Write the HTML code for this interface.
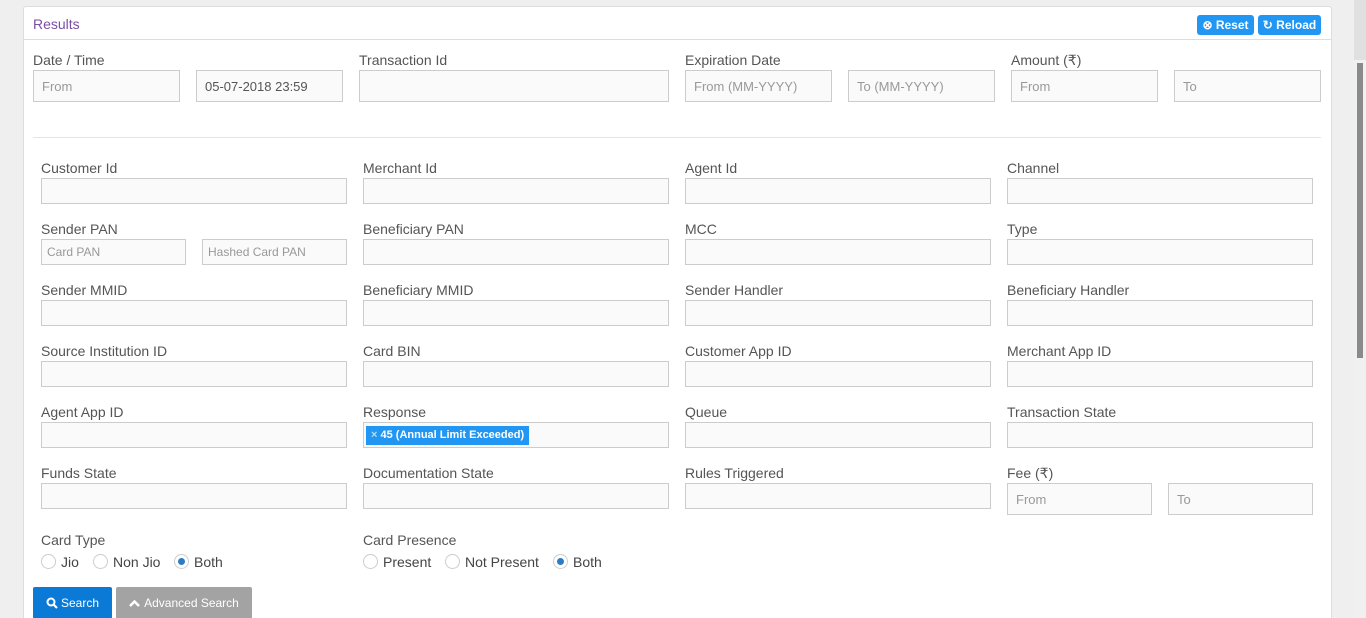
<!DOCTYPE html>
<html style="overflow:hidden;height:618px"><head><meta charset="utf-8"><style>
*{box-sizing:border-box;margin:0;padding:0}
html,body{overflow:hidden}
body{width:1366px;height:618px;overflow:hidden;background:#efefef;font-family:"Liberation Sans",sans-serif;position:relative;color:#555}
.panel{position:absolute;left:23px;top:6px;width:1309px;height:612px;background:#fff;border:1px solid #ddd;border-bottom:none;border-radius:3px 3px 0 0}
.hdr{position:absolute;left:23px;top:39px;width:1309px;height:1px;background:#ddd}
.a{position:absolute}
.lbl{position:absolute;font-size:14px;color:#555;line-height:16px}
.in{position:absolute;background:#fafafa;border:1px solid #ccc;font-size:13px;color:#999;padding-left:8px;display:flex;align-items:center}
.btn{position:absolute;color:#fff;font-size:12px;border-radius:3px;display:flex;align-items:center;justify-content:center;font-weight:bold}
.r{position:absolute;width:15px;height:15px;border:1px solid #ccc;border-radius:50%;background:#fff}
.r.on::after{content:"";position:absolute;left:3px;top:3px;width:7px;height:7px;border-radius:50%;background:#2a7dc4}
.rt{position:absolute;font-size:14px;color:#444;line-height:16px}
</style></head><body>
<div class="panel"></div><div class="hdr"></div>
<div class="lbl" style="left:33px;top:16px;color:#7b4fa6;font-size:14px">Results</div>
<div class="btn" style="left:1197px;top:15px;width:57px;height:20px;background:#2196f3">&#x2297; Reset</div>
<div class="btn" style="left:1258px;top:15px;width:63px;height:20px;background:#2196f3">&#x21bb; Reload</div>
<div class="a" style="left:1354px;top:0;width:12px;height:618px;background:#f0f0f0"></div>
<div class="a" style="left:1354px;top:0;width:12px;height:60px;background:#e0e0e0"></div>
<div class="a" style="left:1357px;top:63px;width:6px;height:295px;background:#8a8a8a"></div>

<div class="lbl" style="left:33px;top:52px">Date / Time</div>
<div class="in" style="left:33px;top:70px;width:147px;height:32px">From</div>
<div class="in" style="left:196px;top:70px;width:147px;height:32px;color:#555">05-07-2018 23:59</div>
<div class="lbl" style="left:359px;top:52px">Transaction Id</div>
<div class="in" style="left:359px;top:70px;width:310px;height:32px"></div>
<div class="lbl" style="left:685px;top:52px">Expiration Date</div>
<div class="in" style="left:685px;top:70px;width:147px;height:32px">From (MM-YYYY)</div>
<div class="in" style="left:848px;top:70px;width:147px;height:32px">To (MM-YYYY)</div>
<div class="lbl" style="left:1011px;top:52px">Amount (₹)</div>
<div class="in" style="left:1011px;top:70px;width:147px;height:32px">From</div>
<div class="in" style="left:1174px;top:70px;width:147px;height:32px">To</div>
<div class="a" style="left:33px;top:137px;width:1288px;height:1px;background:#e5e5e5"></div>

<div class="lbl" style="left:41px;top:160px">Customer Id</div><div class="in" style="left:41px;top:178px;width:306px;height:26px"></div>
<div class="lbl" style="left:363px;top:160px">Merchant Id</div><div class="in" style="left:363px;top:178px;width:306px;height:26px"></div>
<div class="lbl" style="left:685px;top:160px">Agent Id</div><div class="in" style="left:685px;top:178px;width:306px;height:26px"></div>
<div class="lbl" style="left:1007px;top:160px">Channel</div><div class="in" style="left:1007px;top:178px;width:306px;height:26px"></div>

<div class="lbl" style="left:41px;top:221px">Sender PAN</div>
<div class="in" style="left:41px;top:239px;width:145px;height:26px;font-size:12px;padding-left:5px">Card PAN</div>
<div class="in" style="left:202px;top:239px;width:145px;height:26px;font-size:12px;padding-left:5px">Hashed Card PAN</div>
<div class="lbl" style="left:363px;top:221px">Beneficiary PAN</div><div class="in" style="left:363px;top:239px;width:306px;height:26px"></div>
<div class="lbl" style="left:685px;top:221px">MCC</div><div class="in" style="left:685px;top:239px;width:306px;height:26px"></div>
<div class="lbl" style="left:1007px;top:221px">Type</div><div class="in" style="left:1007px;top:239px;width:306px;height:26px"></div>

<div class="lbl" style="left:41px;top:282px">Sender MMID</div><div class="in" style="left:41px;top:300px;width:306px;height:26px"></div>
<div class="lbl" style="left:363px;top:282px">Beneficiary MMID</div><div class="in" style="left:363px;top:300px;width:306px;height:26px"></div>
<div class="lbl" style="left:685px;top:282px">Sender Handler</div><div class="in" style="left:685px;top:300px;width:306px;height:26px"></div>
<div class="lbl" style="left:1007px;top:282px">Beneficiary Handler</div><div class="in" style="left:1007px;top:300px;width:306px;height:26px"></div>

<div class="lbl" style="left:41px;top:343px">Source Institution ID</div><div class="in" style="left:41px;top:361px;width:306px;height:26px"></div>
<div class="lbl" style="left:363px;top:343px">Card BIN</div><div class="in" style="left:363px;top:361px;width:306px;height:26px"></div>
<div class="lbl" style="left:685px;top:343px">Customer App ID</div><div class="in" style="left:685px;top:361px;width:306px;height:26px"></div>
<div class="lbl" style="left:1007px;top:343px">Merchant App ID</div><div class="in" style="left:1007px;top:361px;width:306px;height:26px"></div>

<div class="lbl" style="left:41px;top:404px">Agent App ID</div><div class="in" style="left:41px;top:422px;width:306px;height:26px"></div>
<div class="lbl" style="left:363px;top:404px">Response</div>
<div class="in" style="left:363px;top:422px;width:306px;height:26px;padding-left:2px">
<span style="background:#2196f3;color:#fff;font-size:11px;font-weight:bold;padding:3px 5px;line-height:13px"><span style="color:#bde">×</span> 45 (Annual Limit Exceeded)</span></div>
<div class="lbl" style="left:685px;top:404px">Queue</div><div class="in" style="left:685px;top:422px;width:306px;height:26px"></div>
<div class="lbl" style="left:1007px;top:404px">Transaction State</div><div class="in" style="left:1007px;top:422px;width:306px;height:26px"></div>

<div class="lbl" style="left:41px;top:465px">Funds State</div><div class="in" style="left:41px;top:483px;width:306px;height:26px"></div>
<div class="lbl" style="left:363px;top:465px">Documentation State</div><div class="in" style="left:363px;top:483px;width:306px;height:26px"></div>
<div class="lbl" style="left:685px;top:465px">Rules Triggered</div><div class="in" style="left:685px;top:483px;width:306px;height:26px"></div>
<div class="lbl" style="left:1007px;top:465px">Fee (₹)</div>
<div class="in" style="left:1007px;top:483px;width:145px;height:32px">From</div>
<div class="in" style="left:1168px;top:483px;width:145px;height:32px">To</div>

<div class="lbl" style="left:41px;top:532px">Card Type</div>
<div class="r" style="left:41px;top:554px"></div><div class="rt" style="left:61px;top:554px">Jio</div>
<div class="r" style="left:93px;top:554px"></div><div class="rt" style="left:113px;top:554px">Non Jio</div>
<div class="r on" style="left:174px;top:554px"></div><div class="rt" style="left:194px;top:554px">Both</div>
<div class="lbl" style="left:363px;top:532px">Card Presence</div>
<div class="r" style="left:363px;top:554px"></div><div class="rt" style="left:383px;top:554px">Present</div>
<div class="r" style="left:445px;top:554px"></div><div class="rt" style="left:465px;top:554px">Not Present</div>
<div class="r on" style="left:553px;top:554px"></div><div class="rt" style="left:573px;top:554px">Both</div>

<div class="btn" style="left:33px;top:587px;width:79px;height:32px;background:#0b7ad6;font-weight:normal;border-radius:2px"><svg width="12" height="12" viewBox="0 0 12 12" style="margin-right:3px"><circle cx="5" cy="5" r="3.5" fill="none" stroke="#fff" stroke-width="2"/><path d="M7.5 7.5L11 11" stroke="#fff" stroke-width="2.2"/></svg>Search</div>
<div class="btn" style="left:116px;top:587px;width:136px;height:32px;background:#a3a3a3;font-weight:normal;border-radius:2px"><svg width="11" height="9" viewBox="0 0 11 9" style="margin-right:4px"><path d="M1 7L5.5 2.5L10 7" fill="none" stroke="#fff" stroke-width="2.5"/></svg>Advanced Search</div>
</body></html>
